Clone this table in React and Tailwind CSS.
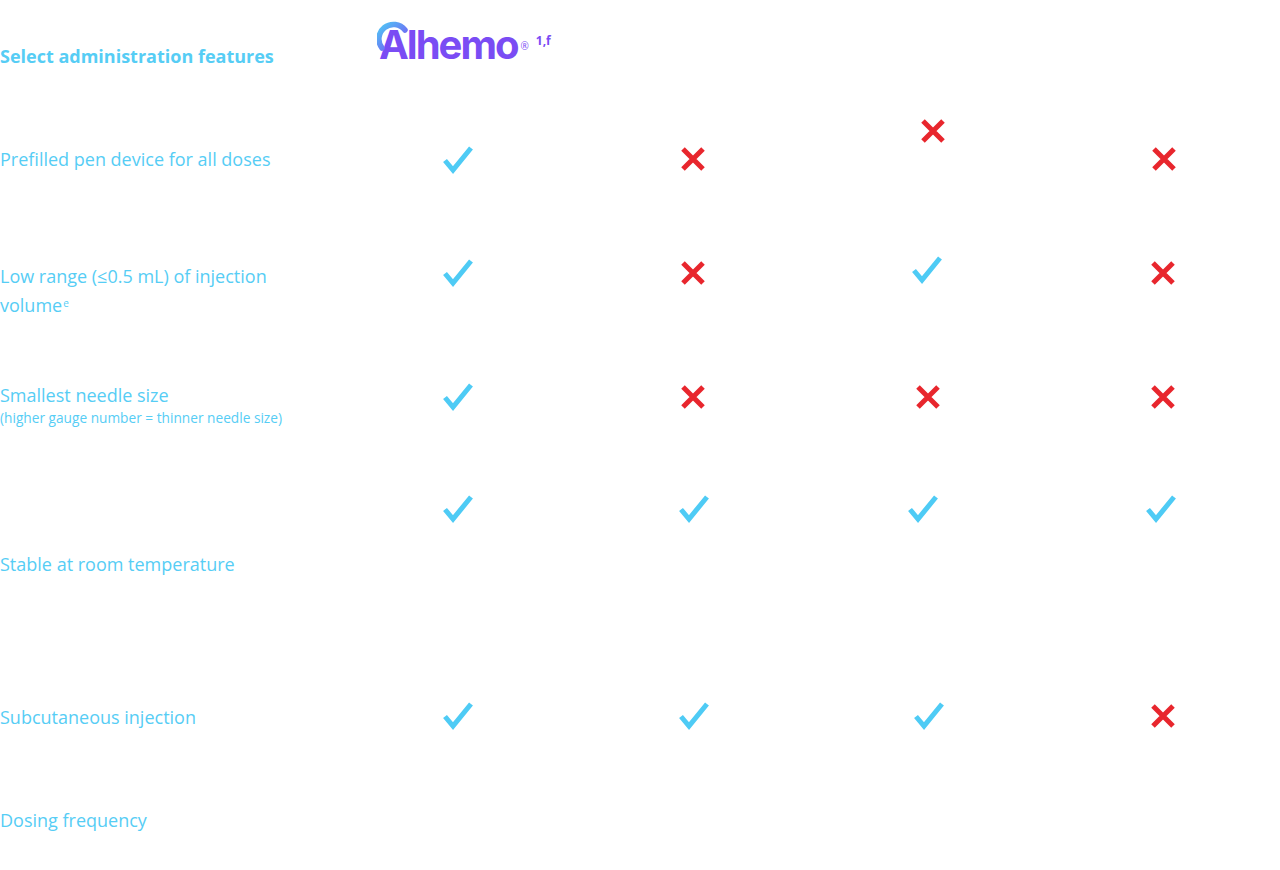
const TEXT = 'text-[#56cdf5]';

function Check() {
  return (
    <svg width="32" height="30" viewBox="0 0 32 30" className="block">
      <path d="M3 15.5 L11 25 L29 3" fill="none" stroke="#4ecbf5" strokeWidth="5" strokeLinecap="butt" strokeLinejoin="miter" />
    </svg>
  );
}

function Cross() {
  return (
    <svg width="26" height="26" viewBox="0 0 26 26" className="block">
      <path d="M3 3 L23 23 M23 3 L3 23" fill="none" stroke="#e8262d" strokeWidth="5" />
    </svg>
  );
}

function Mark({ type, top, shift = 0 }) {
  return (
    <div className="flex justify-center" style={{ paddingTop: top, marginLeft: shift * 2 }}>
      {type === 'c' ? <Check /> : <Cross />}
    </div>
  );
}

function Logo() {
  return (
    <div className="relative flex items-start pl-[39px] pt-[25px]">
      <span className="relative text-[40px] font-bold leading-none tracking-[-0.05em] text-[#7a4cf4]" style={{ fontFamily: 'Inter, sans-serif' }}>
        Alhemo
        <svg className="absolute left-[-2px] top-[-6px]" width="34" height="34" viewBox="0 0 34 34">
          <defs>
            <linearGradient id="arc" x1="0" y1="0" x2="1" y2="1">
              <stop offset="0" stopColor="#4fc8f5" />
              <stop offset="1" stopColor="#7a4cf4" />
            </linearGradient>
          </defs>
          <path d="M5 29 A13 13 0 0 1 28 11" fill="none" stroke="url(#arc)" strokeWidth="5.5" strokeLinecap="round" />
        </svg>
      </span>
      <span className="ml-[3px] mt-[16px] text-[10px] leading-none text-[#7a4cf4]">®</span>
      <span className="ml-[7px] mt-[10px] text-[12px] font-bold leading-none text-[#7a4cf4]">1,f</span>
    </div>
  );
}

export default function App() {
  const row = 'grid grid-cols-[340px_repeat(4,235px)] items-start';
  return (
    <div className={`w-[1280px] h-[870px] overflow-hidden bg-white ${TEXT}`} style={{ fontFamily: '"Open Sans", "Noto Sans", sans-serif' }}>
      <div className={`${row} h-[110px]`}>
        <div className="pt-[44px] text-[18px] font-bold leading-[24px]">Select administration features</div>
        <Logo />
      </div>

      <div className={`${row} h-[110px]`}>
        <div className="pt-[37px] text-[18px] leading-[24px]">Prefilled pen device for all doses</div>
        <Mark type="c" top={35} />
        <Mark type="x" top={36} />
        <Mark type="x" top={8} shift={5.5} />
        <Mark type="x" top={36} shift={1} />
      </div>

      <div className={`${row} h-[125px]`}>
        <div className="pt-[43px] text-[18px] leading-[27px]">
          Low range (≤0.5 mL) of injection
          <br />
          volume<span className="ml-[1px] text-[10px] align-[5px]">e</span>
        </div>
        <Mark type="c" top={38} />
        <Mark type="x" top={40} />
        <Mark type="c" top={35} shift={-1} />
        <Mark type="x" top={40} />
      </div>

      <div className={`${row} h-[115px]`}>
        <div className="pt-[38px]">
          <div className="text-[18px] leading-[24px]">Smallest needle size</div>
          <div className="mt-[2px] text-[13.7px] leading-[18px]">(higher gauge number = thinner needle size)</div>
        </div>
        <Mark type="c" top={37} />
        <Mark type="x" top={39} />
        <Mark type="x" top={39} />
        <Mark type="x" top={39} />
      </div>

      <div className={`${row} h-[200px]`}>
        <div className="pt-[92px] text-[18px] leading-[24px]">Stable at room temperature</div>
        <Mark type="c" top={34} />
        <Mark type="c" top={34} shift={1} />
        <Mark type="c" top={34} shift={-4.5} />
        <Mark type="c" top={34} shift={-1.5} />
      </div>

      <div className={`${row} h-[110px]`}>
        <div className="pt-[45px] text-[18px] leading-[24px]">Subcutaneous injection</div>
        <Mark type="c" top={41} />
        <Mark type="c" top={41} shift={1} />
        <Mark type="c" top={41} shift={1.5} />
        <Mark type="x" top={43} />
      </div>

      <div className={`${row} h-[100px]`}>
        <div className="pt-[38px] text-[18px] leading-[24px]">Dosing frequency</div>
      </div>
    </div>
  );
}
